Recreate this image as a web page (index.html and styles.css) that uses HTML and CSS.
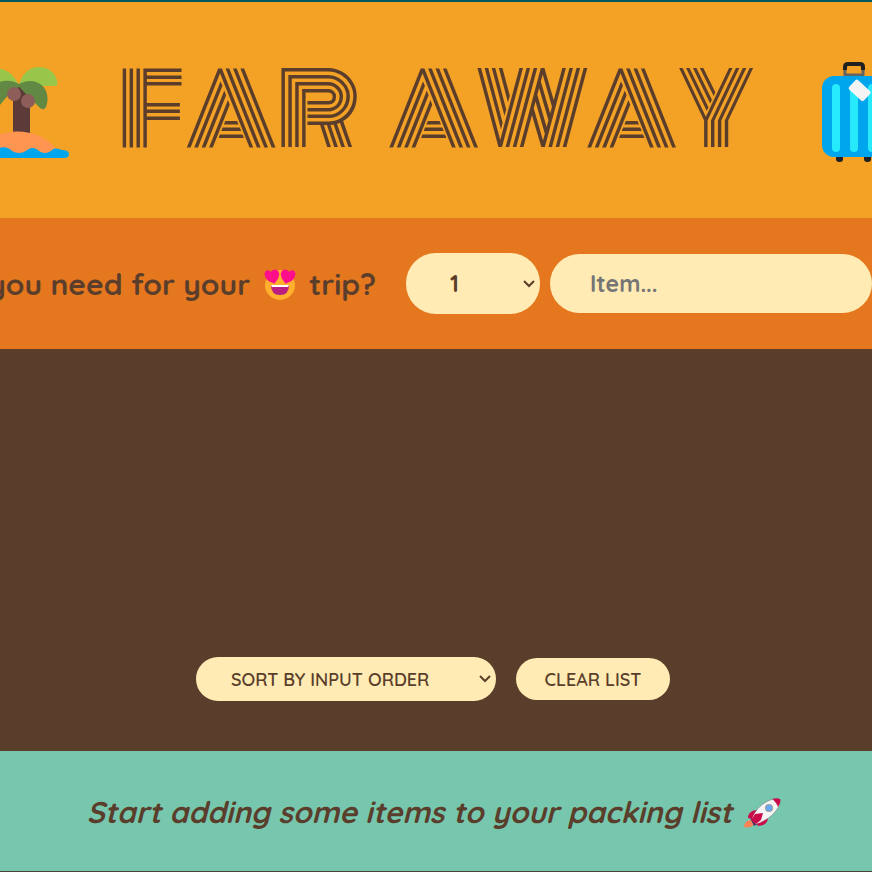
FILE: index.html
```html
<!DOCTYPE html>
<html lang="en">
<head>
<meta charset="utf-8">
<meta name="viewport" content="width=device-width, initial-scale=1">
<title>Far Away</title>
<link rel="stylesheet" href="styles.css">
</head>
<body>
<div class="app">
  <header class="banner">
    <svg class="palm" viewBox="0 0 69 100" aria-hidden="true">
      <path fill="#97c64b" d="M19 20C13 3-5-2-18 6v14zM19 20C22 5 32 1 39 1c12 0 18 9 18.500 16q0 3-3 3H30z"/>
      <path fill="#5c3a38" d="M13 23 19 19 30 30V70H13z"/>
      <path fill="#618943" d="M19 18C10 12-5 14-9 24L0 39 9 28 19 21 40 42q4 3 6-1C53 21 35 9 19 18z"/>
      <path fill="#5c3a38" d="M19 21 30 33V45H13V28z"/>
      <circle cx="14" cy="28" r="7" fill="#8c5d59"/><circle cx="28" cy="35" r="7" fill="#8c5d59"/>
      <path fill="#ff9550" d="M-4 70C15 61 43 65 57 84L54 90H-4z"/>
      <path fill="#00a6ed" d="M-5 84c8-5 14-2 17 1q7 4 14 0c4-4 9-4 13 0q6 4 12 0c4-4 7-2 11-1q7 0 7 4 0 4-5 4H-5z"/>
    </svg>
    <h1 class="title"><span>FAR</span> <span>AWAY</span></h1>
    <svg class="suitcase" viewBox="0 0 50 100" aria-hidden="true">
      <path fill="none" stroke="#636363" stroke-width="3" d="M23 14V7M41 14V7M22 13H42"/>
      <path fill="none" stroke="#212121" stroke-width="4" d="M23 8V5q0-3 3-3H38q3 0 3 3V8"/>
      <rect x="14" y="90" width="7" height="10" rx="3" fill="#212121"/><rect x="42" y="90" width="7" height="10" rx="3" fill="#212121"/>
      <rect y="14" width="100" height="81" rx="12" fill="#00a6ed"/>
      <g fill="#26eafc"><rect x="10" y="22" width="8" height="68" rx="4"/><rect x="28" y="22" width="8" height="68" rx="4"/><rect x="46" y="22" width="8" height="68" rx="4"/></g>
      <rect x="28" y="22" width="20" height="13" rx="2" fill="#f4f4f4" transform="rotate(43 38 28)"/>
    </svg>
  </header>

  <form class="add-form">
    <label class="prompt" for="item">you need for your
      <svg class="emoji" viewBox="0 0 32 32" role="img" aria-label="heart eyes">
        <circle cx="16" cy="16" r="15" fill="#ffb02e"/>
        <path fill="#bb1d80" d="M7 16H25Q25 26 16 26T7 16z"/><path fill="#fff" d="M7 16H25L24 18H8z"/>
        <path fill="#ff0e8c" d="M7 3C4-1-1 2 1 7c1 4 5 6 8 7q1 1 2 0c2-3 5-6 4-10-1-5-7-4-8-1z"/>
        <path fill="#ff0e8c" d="M25 3c3-4 8-1 6 4-1 4-5 6-8 7q-1 1-2 0c-2-3-5-6-4-10 1-5 7-4 8-1z"/>
      </svg>
      trip?</label>
    <select class="field quantity" aria-label="Quantity"><option>1</option><option>2</option><option>3</option></select>
    <input class="field item" id="item" type="text" placeholder="Item...">
  </form>

  <main class="list">
    <div class="actions">
      <select class="pill sort" aria-label="Sort"><option>SORT BY INPUT ORDER</option></select>
      <button class="pill clear" type="button">CLEAR LIST</button>
    </div>
  </main>

  <footer class="stats">
    <em>Start adding some items to your packing list
      <svg class="rocket" viewBox="0 0 37 30" role="img" aria-label="rocket">
        <path fill="#ff8257" d="M6 22C2 23 0 26 0 29c4 1 8 0 10-3z"/>
        <path fill="#533566" d="M6 20 9 19 14 26 10 28z"/>
        <path fill="#ca0b4a" d="M14 12C8 12 4 15 4 20l6 1zM24 19c0 6-4 9-10 9l-3-6z"/>
        <path fill="#f4f4f4" d="M8 21C11 12 19 4 30 1L35 8C30 17 22 23 12 26z"/>
        <path fill="#ca0b4a" d="M28 1C31 0 34 0 36 1c1 2 0 5-2 8C33 6 31 3 28 1zM7 22 11 16 19 15 17 22 12 26z"/>
        <circle cx="25" cy="10" r="4" fill="#9b9b9b"/><circle cx="25" cy="10" r="3" fill="#66a8f2"/>
        <path fill="none" stroke="#8f7186" stroke-width=".5" d="M10 16C15 8 21 3 30 1M35 8C30 17 24 21 17 24"/>
      </svg>
    </em>
  </footer>
</div>
</body>
</html>
```
FILE: styles.css
```css
* { box-sizing: border-box; margin: 0; padding: 0; }

body {
  background: #5a3e2b;
  color: #5a3e2b;
  font-family: Quicksand, Lato, sans-serif;
  font-weight: 700;
}

.app {
  min-height: 100vh;
  display: grid;
  grid-template-columns: minmax(0, 1fr);
  grid-template-rows: auto auto 1fr auto;
  overflow: hidden;
  border-top: 2px solid #00575f;
  border-bottom: 1px solid #46433b;
}

.banner {
  display: flex;
  align-items: center;
  justify-content: space-between;
  height: 216px;
  background: #f4a226;
}
.palm { flex: none; width: 69px; height: 100px; margin-top: 12px; }
.suitcase { flex: none; width: 50px; height: 100px; margin-top: 4px; }

.title {
  display: flex;
  gap: 28px;
  padding-right: 18px;
  font-family: Monoton, "DejaVu Sans", sans-serif;
  font-size: 98px;
  font-weight: 400;
  line-height: 1;
  white-space: nowrap;
}

.add-form {
  display: flex;
  align-items: center;
  justify-content: flex-end;
  gap: 10px;
  height: 131px;
  background: #e5771f;
}
.prompt { margin-right: 20px; font-size: 30px; white-space: nowrap; }
.emoji { width: 32px; height: 32px; margin: 0 5px; vertical-align: -6px; }

select, input, button {
  border: 0;
  background-color: #ffebb3;
  color: #5a3e2b;
  font: inherit;
}
select {
  appearance: none;
  background-image: url("data:image/svg+xml,%3Csvg xmlns='http://www.w3.org/2000/svg' viewBox='0 0 12 8'%3E%3Cpath d='M1 1 6 6 11 1' fill='none' stroke='%235a3e2b' stroke-width='2'/%3E%3C/svg%3E");
  background-position: right 5px center;
  background-repeat: no-repeat;
  background-size: 12px 8px;
}
.field { flex: none; font-size: 23px; border-radius: 30px; }
.quantity { width: 134px; height: 61px; padding: 0 44px; }
.item { width: 322px; height: 59px; padding: 0 40px; }
.item::placeholder { color: #757575; }

.list {
  display: flex;
  flex-direction: column;
  justify-content: flex-end;
  padding: 40px 0 50px;
}
.actions {
  display: flex;
  align-items: center;
  justify-content: center;
  gap: 20px;
  padding-right: 6px;
}
.pill { font-size: 18px; font-weight: 600; border-radius: 22px; }
.sort { width: 300px; height: 44px; padding: 0 35px; }
.clear { width: 154px; height: 42px; }

.stats {
  display: flex;
  align-items: center;
  justify-content: center;
  height: 120px;
  padding: 2px 4px 0 0;
  background: #76c7ad;
  font-size: 30px;
  white-space: nowrap;
}
.rocket { width: 37px; height: 30px; margin-left: 4px; vertical-align: -5px; }
```
